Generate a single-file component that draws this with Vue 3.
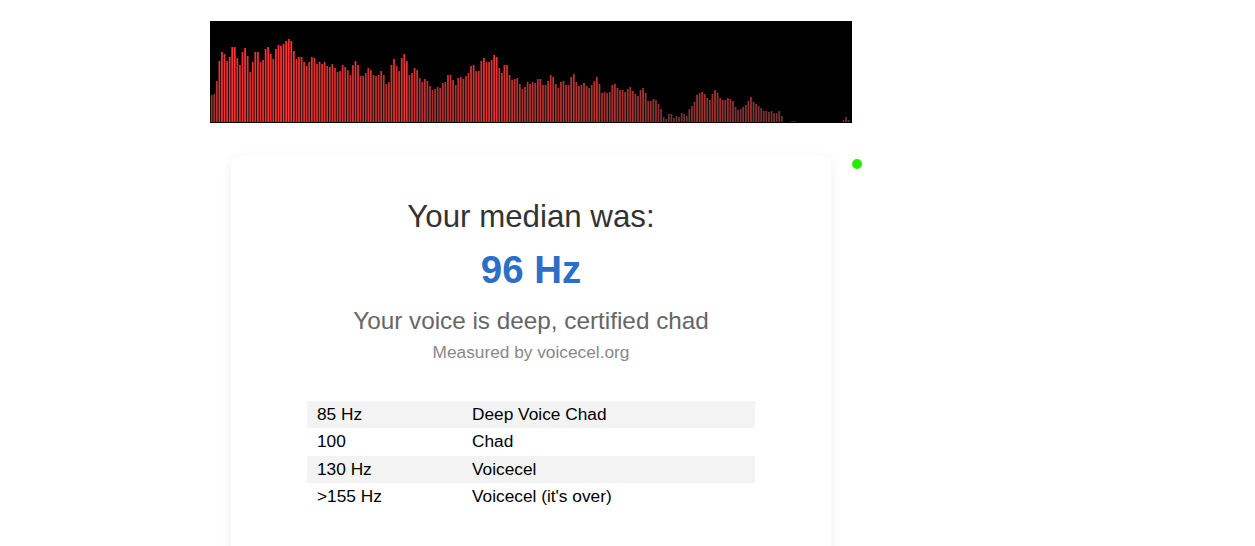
<script setup>
import { ref, onMounted } from 'vue';

const canvas = ref(null);

// bar tops read off the spectrum, one entry per frequency bin
const bars = [
    27, 28, 41, 61, 70, 68, 61, 65, 75, 75, 64, 57, 70, 74, 66, 50, 60, 70, 70, 60, 62, 73, 75, 68, 63, 73, 77, 76, 78, 81,
    83, 81, 71, 63, 65, 65, 60, 56, 60, 65, 64, 58, 60, 58, 60, 56, 55, 58, 54, 50, 51, 57, 55, 52, 47, 57, 61, 57, 46, 46,
    49, 54, 52, 47, 46, 47, 51, 47, 38, 40, 57, 63, 56, 51, 64, 68, 61, 47, 49, 54, 52, 44,
    40, 43, 41, 36, 32, 33, 35, 34, 39, 40, 47, 47, 42, 37, 44, 45, 43, 46, 49, 56, 57, 51, 51, 61, 64, 60, 60, 62, 67, 65,
    54, 49, 57, 57, 47, 42, 43, 44, 38, 33, 35, 40, 38, 40, 39, 43, 43, 37, 37, 41, 47, 45, 38, 34, 40, 41, 37, 37, 45, 48,
    40, 36, 37, 39, 36, 34, 37, 41, 45, 38, 29, 30, 29, 30, 37, 38, 34, 32, 32, 30, 33, 35, 31, 28, 26, 32,
    34, 29, 21, 21, 23, 22, 18, 13, 5, 3, 8, 8, 4, 6, 5, 9, 8, 6, 13, 16, 20, 27, 29, 30, 28, 24, 22, 28, 32, 29, 24, 22,
    22, 24, 23, 21, 15, 12, 13, 15, 17, 21, 25, 20, 18, 16, 14, 11, 11, 10, 11, 9, 9, 11, 6,
    0, 0, 0, 1, 1, 0, 0, 0, 0, 0, 0, 0, 0, 0, 0, 0, 0, 0, 0, 0, 0, 0, 0, 2, 5, 2, 0,
];

const rows = [
    { hz: '85 Hz', label: 'Deep Voice Chad' },
    { hz: '100', label: 'Chad' },
    { hz: '130 Hz', label: 'Voicecel' },
    { hz: '>155 Hz', label: "Voicecel (it's over)" },
];

onMounted(() => {
    const ctx = canvas.value.getContext('2d');
    const width = canvas.value.width;
    const height = canvas.value.height;
    ctx.fillStyle = '#000';
    ctx.fillRect(0, 0, width, height);

    const step = width / 250;
    bars.forEach((h, i) => {
        ctx.fillStyle = `rgb(${Math.min(255, h * 2 + 100)},50,50)`;
        ctx.fillRect(i * step + 0.8, height - 1 - h, step - 0.8, h);
    });
});
</script>

<template>
    <div class="page">
        <canvas ref="canvas" class="spectrum" width="642" height="102"></canvas>
        <div class="result-wrap">
            <span class="status-dot"></span>
            <div class="card">
                <h2 class="title">Your median was:</h2>
                <div class="value">96 Hz</div>
                <div class="verdict">Your voice is deep, certified chad</div>
                <div class="credit">Measured by voicecel.org</div>
                <table class="scale">
                    <tbody>
                        <tr v-for="row in rows" :key="row.hz">
                            <td class="hz">{{ row.hz }}</td>
                            <td>{{ row.label }}</td>
                        </tr>
                    </tbody>
                </table>
            </div>
        </div>
    </div>
</template>

<style>
html,
body {
    margin: 0;
    background: #fff;
    overflow: hidden;
}
</style>

<style scoped>
.page {
    width: 1062px;
    height: 546px;
    padding-top: 21px;
    box-sizing: border-box;
    display: flex;
    flex-direction: column;
    align-items: center;
    font-family: "Liberation Sans", Arial, sans-serif;
    overflow: hidden;
}
.spectrum {
    display: block;
    width: 642px;
    height: 102px;
}
.result-wrap {
    position: relative;
    margin-top: 32px;
}
.status-dot {
    position: absolute;
    left: 621px;
    top: 4px;
    width: 10px;
    height: 10px;
    border-radius: 50%;
    background: #22ee00;
}
.card {
    width: 600px;
    height: 420px;
    padding-top: 45px;
    box-sizing: border-box;
    border-radius: 10px;
    background: #fff;
    box-shadow: 0 3px 12px rgba(0, 0, 0, 0.07);
    text-align: center;
}
.title {
    margin: 0;
    font-size: 31.25px;
    font-weight: 400;
    line-height: 34px;
    color: #333;
}
.value {
    margin-top: 14px;
    font-size: 38.4px;
    font-weight: 700;
    line-height: 44px;
    color: #2b6fc7;
}
.verdict {
    margin-top: 15px;
    font-size: 24.3px;
    line-height: 28px;
    color: #666;
}
.credit {
    margin-top: 7px;
    font-size: 17.3px;
    line-height: 20px;
    color: #888;
}
.scale {
    width: 448px;
    margin: 39px auto 0;
    border-collapse: collapse;
    text-align: left;
    font-size: 17.3px;
    color: #000;
}
.scale td {
    height: 27.4px;
    padding: 0 10px 0.6px;
    box-sizing: border-box;
}
.scale .hz {
    width: 155px;
}
.scale tr:nth-child(odd) {
    background: #f3f3f3;
}
</style>
